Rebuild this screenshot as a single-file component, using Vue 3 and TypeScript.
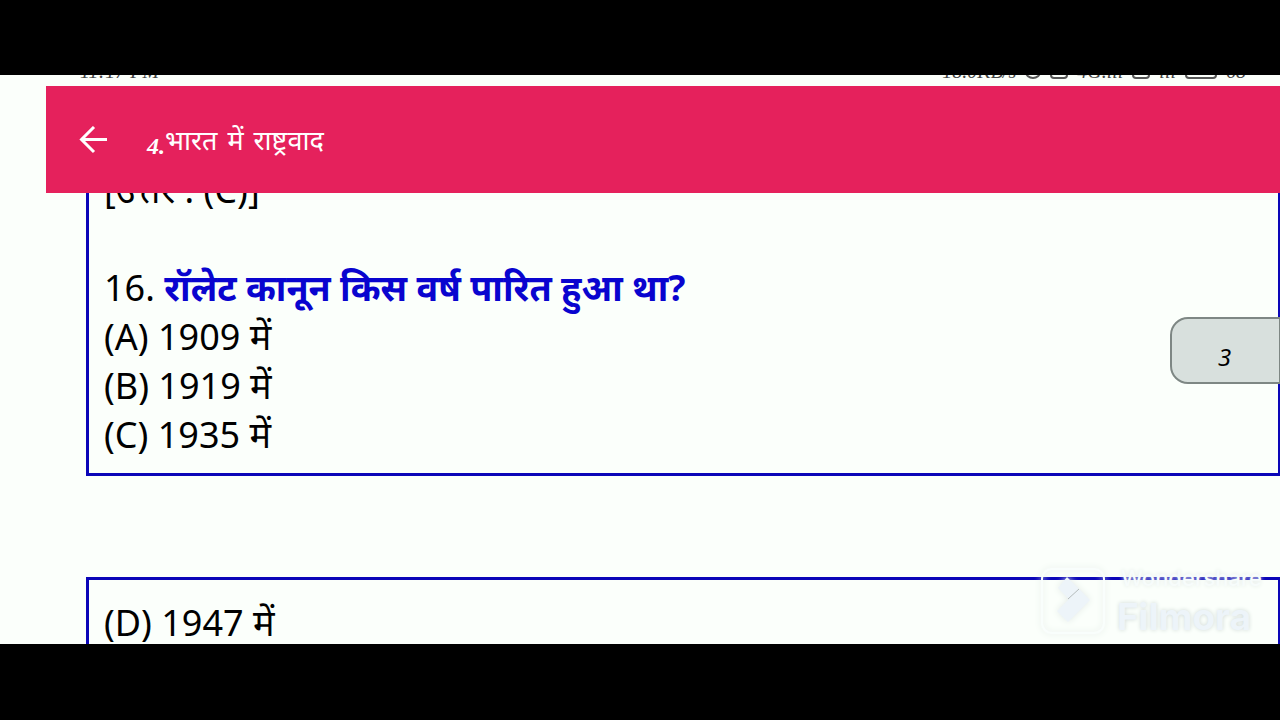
<script setup lang="ts">
import { ref } from 'vue'

interface Option {
  key: string
  text: string
}

const titleWords = ref(['भारत', 'में', 'राष्ट्रवाद'])
const pageNumber = ref(3)
const firstOptions: Option[] = [
  { key: 'A', text: '1909 में' },
  { key: 'B', text: '1919 में' },
  { key: 'C', text: '1935 में' },
]
const lastOptions: Option[] = [{ key: 'D', text: '1947 में' }]
</script>

<template>
  <div class="frame">
    <main class="screen">
      <div class="status">
        <span class="clock">11:17 PM</span>
        <span class="indicators">
          <span>18.0KB/s</span>
          <i class="ring"></i>
          <i class="chip"></i>
          <span>4G.ııl</span>
          <i class="chip"></i>
          <span>ııl</span>
          <i class="battery"></i>
          <span>68</span>
        </span>
      </div>

      <header class="bar">
        <button class="back" type="button" aria-label="Back">
          <svg viewBox="0 0 28 28" width="28" height="28" aria-hidden="true">
            <path d="M28 13.5H3M15 1L2.500 13.500l12.500 12.500" fill="none" stroke="currentColor" stroke-width="3" />
          </svg>
        </button>
        <h1 class="title">
          <span><span class="num">4.</span>{{ titleWords[0] }}</span>
          <span v-for="w in titleWords.slice(1)" :key="w">{{ w }}</span>
        </h1>
      </header>

      <div class="document">
        <section class="sheet sheet-first">
          <p>[उत्तर : (C)]</p>
          <p class="question">16. <strong>रॉलेट कानून किस वर्ष पारित हुआ था?</strong></p>
          <p v-for="o in firstOptions" :key="o.key">({{ o.key }}) {{ o.text }}</p>
        </section>
        <section class="sheet sheet-next">
          <p v-for="o in lastOptions" :key="o.key">({{ o.key }}) {{ o.text }}</p>
        </section>
      </div>

      <button class="page-tab" type="button" aria-label="Page">{{ pageNumber }}</button>

      <div class="watermark">
        <svg class="logo" viewBox="0 0 68 70" width="68" height="70" aria-hidden="true">
          <rect class="logo-box" x="3" y="3" width="62" height="64" rx="10" />
          <path class="logo-mark" d="M28 11L51 34 29 56 18 45 30 33 19 22Z" />
          <path class="logo-cut" d="M29 33L40 23" />
        </svg>
        <div class="words">
          <span class="maker">Wondershare</span>
          <span class="product">Filmora</span>
        </div>
      </div>
    </main>
  </div>
</template>

<style>
body {
  margin: 0;
  background: #000;
}
</style>

<style scoped>
.frame {
  box-sizing: border-box;
  height: 100vh;
  padding: 75px 0 76px;
  background: #000;
  font-family: "Noto Sans", "Open Sans", sans-serif;
}
.screen {
  position: relative;
  display: flex;
  flex-direction: column;
  height: 100%;
  overflow: hidden;
  background: #fbfffb;
  color: #000;
}
.status {
  display: flex;
  flex: none;
  justify-content: space-between;
  align-items: flex-end;
  box-sizing: border-box;
  height: 11px;
  padding: 0 34px 6px 80px;
  font: italic 20px/20px "Liberation Serif", serif;
  overflow: hidden;
  color: #444;
}
.clock,
.indicators {
  margin-bottom: -1px;
}
.indicators {
  display: flex;
  align-items: flex-end;
  gap: 9px;
}
.ring,
.chip,
.battery {
  box-sizing: border-box;
  height: 14px;
  margin-bottom: 2px;
  border: 2px solid #555;
  border-radius: 4px;
}
.ring {
  width: 16px;
  border-radius: 50%;
}
.chip {
  width: 18px;
}
.battery {
  width: 32px;
}
.bar {
  position: relative;
  z-index: 1;
  display: flex;
  flex: none;
  align-items: center;
  gap: 40px;
  height: 107px;
  margin-left: 46px;
  padding-left: 33px;
  background: #e5215c;
  color: #fff;
}
.back {
  display: flex;
  padding: 0;
  border: 0;
  background: none;
  color: inherit;
}
.title {
  display: flex;
  align-items: baseline;
  gap: 10px;
  margin: 0;
  font-size: 27px;
  line-height: 40px;
  font-weight: 400;
}
.num {
  font: italic bold 24px "Liberation Serif", serif;
  vertical-align: -4px;
}
.document {
  flex: none;
  margin: -39px 0 0 86px;
}
.sheet {
  padding: 0 15px;
  border: 3px solid #0b06b8;
  border-right-width: 2px;
  font-size: 36px;
  line-height: 49px;
}
.sheet p {
  margin: 0;
}
.sheet .question {
  margin-top: 49px;
}
.question strong {
  color: #0904cf;
}
.sheet-first {
  padding-top: 8px;
  padding-bottom: 14px;
}
.sheet-next {
  margin-top: 101px;
  padding-top: 18px;
  padding-bottom: 40px;
}
.page-tab {
  position: absolute;
  top: 242px;
  right: 0;
  width: 110px;
  height: 67px;
  padding: 12px 2px 0 0;
  border: 2px solid #7e8784;
  border-right-width: 1px;
  border-radius: 18px 0 0 18px;
  background: #d8e0dd;
  color: #000;
  font: italic 24px/28px "Noto Sans", sans-serif;
}
.watermark {
  position: absolute;
  right: 18px;
  bottom: 8px;
  display: flex;
  align-items: flex-end;
  gap: 10px;
  color: #edf4f9;
}
.logo {
  filter: drop-shadow(0 0 3px #e3eae7);
}
.logo-box {
  fill: none;
  stroke: #f9fefc;
  stroke-width: 2;
}
.logo-mark {
  fill: #edf4f9;
}
.logo-cut {
  stroke: #b5bcbc;
  stroke-width: 1;
}
.words {
  display: flex;
  flex-direction: column;
  margin-bottom: -6px;
  font-family: Inter, sans-serif;
}
.maker {
  padding-left: 4px;
  font-size: 22px;
  line-height: 28px;
  font-weight: 500;
  color: #f7fcfb;
  text-shadow: 0 0 4px #e3eae7;
}
.product {
  font-size: 37px;
  line-height: 50px;
  font-weight: 700;
  text-shadow: 0 0 4px #d0d9d7;
}
</style>
